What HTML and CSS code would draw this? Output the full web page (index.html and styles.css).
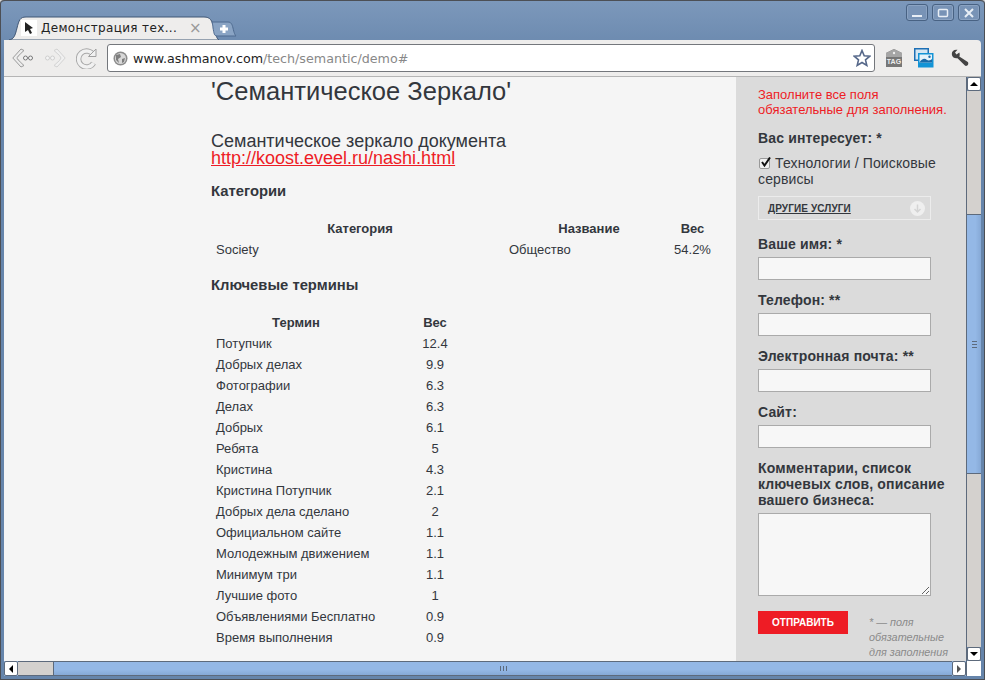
FILE: index.html
```html
<!DOCTYPE html>
<html lang="ru">
<head>
    <meta charset="UTF-8">
    <title>Демонстрация технологии</title>
    <link rel="stylesheet" href="styles.css">
</head>
<body>
<div class="window">
    <!-- верхняя полоса с вкладками -->
    <div class="tabstrip">
        <div class="tab">
            <svg class="tab-shape" width="210" height="24" viewBox="0 0 210 24">
                <path d="M0 24 C5 23 6 20 8 12 C10 4 11 1 17 1 L195 1 C201 1 203 4 205 12 C207 20 208 23 210 24 Z" fill="#eeedec" stroke="#3f5675" stroke-width="1"/>
            </svg>
            <span class="favicon">
                <svg width="10" height="12" viewBox="0 0 10 12"><path d="M1 0 L9 6 L6 7 L8 11 L6 12 L4 8 L1 10 Z" fill="#222"/></svg>
            </span>
            <span class="tab-title">Демонстрация тех...</span>
            <span class="tab-close">×</span>
        </div>
        <svg class="newtab" width="26" height="16" viewBox="0 0 26 16">
            <path d="M1 1 L17 1 C20 1 21 3 22 7 C23 12 24 14 25 15 L6 15 C3 15 3 12 2 7 C2 4 1 2 1 1 Z" fill="#8aa4c4" stroke="#4f6b90"/>
            <path d="M9 8 H17 M13 4 V12" stroke="#fff" stroke-width="3"/>
        </svg>
        <div class="winbtns">
            <div class="winbtn"><svg width="12" height="12" viewBox="0 0 12 12"><path d="M1 9 H11" stroke="#e8eef5" stroke-width="2"/></svg></div>
            <div class="winbtn"><svg width="12" height="12" viewBox="0 0 12 12"><rect x="1.5" y="2.5" width="9" height="7" rx="1" fill="none" stroke="#e8eef5" stroke-width="1.5"/></svg></div>
            <div class="winbtn"><svg width="12" height="12" viewBox="0 0 12 12"><path d="M2 2 L10 10 M10 2 L2 10" stroke="#e8eef5" stroke-width="2"/></svg></div>
        </div>
    </div>

    <!-- панель адреса -->
    <div class="toolbar">
        <svg class="nav-back" width="22" height="22" viewBox="0 0 22 22">
            <path d="M9 2 L0.8 11 L9 20 L12 18.5 L6.5 13.5 L5 11 L6.5 8.5 L12 3.5 Z" fill="#ececec" stroke="#9a9a9a"/>
            <path d="M9.5 5.5 L5 11 L9.5 16.5" fill="none" stroke="#bdbdbd"/>
            <circle cx="13.5" cy="11" r="2" fill="#f4f4f4" stroke="#777"/>
            <circle cx="18.5" cy="11" r="2" fill="#f4f4f4" stroke="#777"/>
        </svg>
        <svg class="nav-fwd" width="22" height="22" viewBox="0 0 22 22">
            <path d="M13 2 L21.2 11 L13 20 L10 18.5 L15.5 13.5 L17 11 L15.5 8.5 L10 3.5 Z" fill="#f0f0f0" stroke="#d2d2d2"/>
            <circle cx="3.5" cy="11" r="2" fill="#f4f4f4" stroke="#cfcfcf"/>
            <circle cx="8.5" cy="11" r="2" fill="#f4f4f4" stroke="#cfcfcf"/>
        </svg>
        <svg class="nav-reload" width="21" height="22" viewBox="0 0 21 22">
            <path d="M17.5 8 A8 8 0 1 0 17.5 16" fill="none" stroke="#a8a8a8" stroke-width="5.5"/>
            <path d="M17.5 8 A8 8 0 1 0 17.5 16" fill="none" stroke="#f1f1f1" stroke-width="3.5"/>
            <path d="M12.5 9.5 L20 9.5 L20 2 Z" fill="#f1f1f1" stroke="#a0a0a0"/>
        </svg>
        <div class="addressbar">
            <svg class="globe" width="15" height="15" viewBox="0 0 15 15">
                <circle cx="7.5" cy="7.5" r="7" fill="#8c8c8c"/>
                <circle cx="7.5" cy="7.5" r="5.5" fill="#d8d8d8"/>
                <path d="M3 4 L7 3 L8 6 L5 8 L6 12 L3 9 Z M9 8 L12 7 L11 11 L9 12 Z" fill="#7e7e7e"/>
            </svg>
            <span class="url">www.ashmanov.com<span class="url-path">/tech/semantic/demo#</span></span>
            <svg class="star" width="18" height="18" viewBox="0 0 18 18">
                <path d="M9 1.5 L11.2 6.7 L16.8 7.2 L12.5 10.9 L13.8 16.4 L9 13.5 L4.2 16.4 L5.5 10.9 L1.2 7.2 L6.8 6.7 Z" fill="#fff" stroke="#56688a" stroke-width="1.6"/>
            </svg>
        </div>
        <svg class="ext-tag" width="18" height="20" viewBox="0 0 18 20">
            <path d="M9 1 L17 5 V19 H1 V5 Z" fill="#777"/>
            <path d="M9 1 L17 5 V9 H1 V5 Z" fill="#a5a5a5"/>
            <circle cx="9" cy="5" r="1.2" fill="#eee"/>
            <text x="9" y="16" class="tag-text">TAG</text>
        </svg>
        <svg class="ext-pic" width="20" height="20" viewBox="0 0 20 20">
            <rect x="0" y="0" width="15" height="13" fill="#1c6fb5"/>
            <rect x="1.5" y="1.5" width="12" height="10" fill="#d5e6f2"/>
            <rect x="4" y="5" width="15.5" height="14.5" fill="#1394d6"/>
            <rect x="5.5" y="6.5" width="12.5" height="8" fill="#e4f2fa"/>
            <path d="M5.5 14.5 C8 10 11 10 13 12 C15 13 17 12 18 11 V14.5 Z" fill="#1a6aa8"/>
            <circle cx="15.5" cy="8.8" r="1.2" fill="#1a6aa8"/>
        </svg>
        <svg class="ext-wrench" width="18" height="18" viewBox="0 0 18 18">
            <path d="M0.8 5 C0.8 2 3 0.3 6.5 0.8 L4 3.5 L5.5 5.5 L8.3 3.5 C9 5.5 8.8 6.5 8.3 7.5 L16.8 13 C18 14.5 17 17.5 14.2 16.8 L6.5 9.2 C3.5 9.7 0.8 8 0.8 5 Z" fill="#444"/>
        </svg>
    </div>

    <div class="viewport">
        <div class="page-col">
            <div class="page">
                <main class="content">
                    <h1 class="title">'Семантическое Зеркало'</h1>
                    <div class="doc-head">
                        Семантическое зеркало документа<br>
                        <a href="#">http://koost.eveel.ru/nashi.html</a>
                    </div>

                    <h3 class="section">Категории</h3>
                    <table class="data cats">
                        <tr><th>Категория</th><th>Название</th><th>Вес</th></tr>
                        <tr><td>Society</td><td>Общество</td><td class="num">54.2%</td></tr>
                    </table>

                    <h3 class="section terms-head">Ключевые термины</h3>
                    <table class="data terms">
                        <tr><th>Термин</th><th>Вес</th></tr>
                        <tr><td>Потупчик</td><td class="num">12.4</td></tr>
                        <tr><td>Добрых делах</td><td class="num">9.9</td></tr>
                        <tr><td>Фотографии</td><td class="num">6.3</td></tr>
                        <tr><td>Делах</td><td class="num">6.3</td></tr>
                        <tr><td>Добрых</td><td class="num">6.1</td></tr>
                        <tr><td>Ребята</td><td class="num">5</td></tr>
                        <tr><td>Кристина</td><td class="num">4.3</td></tr>
                        <tr><td>Кристина Потупчик</td><td class="num">2.1</td></tr>
                        <tr><td>Добрых дела сделано</td><td class="num">2</td></tr>
                        <tr><td>Официальном сайте</td><td class="num">1.1</td></tr>
                        <tr><td>Молодежным движением</td><td class="num">1.1</td></tr>
                        <tr><td>Минимум три</td><td class="num">1.1</td></tr>
                        <tr><td>Лучшие фото</td><td class="num">1</td></tr>
                        <tr><td>Объявлениями Бесплатно</td><td class="num">0.9</td></tr>
                        <tr><td>Время выполнения</td><td class="num">0.9</td></tr>
                    </table>
                </main>

                <aside class="sidebar">
                    <p class="error">Заполните все поля обязательные для заполнения.</p>
                    <div class="label first">Вас интересует: *</div>
                    <div class="check-row">
                        <span class="checkbox">
                            <svg width="11" height="11" viewBox="0 0 11 11"><path d="M2 5 L4.5 8.5 L10 0.5" fill="none" stroke="#111" stroke-width="2"/></svg>
                        </span>
                        Технологии / Поисковые сервисы
                    </div>
                    <div class="more">
                        <a href="#">ДРУГИЕ УСЛУГИ</a>
                        <svg width="15" height="15" viewBox="0 0 15 15">
                            <circle cx="7.5" cy="7.5" r="7.5" fill="#efefef"/>
                            <path d="M7.5 3.5 V11 M4.5 8 L7.5 11 L10.5 8" fill="none" stroke="#d4d4d4" stroke-width="1.5"/>
                        </svg>
                    </div>
                    <div class="label">Ваше имя: *</div>
                    <input class="field" type="text">
                    <div class="label">Телефон: **</div>
                    <input class="field" type="text">
                    <div class="label">Электронная почта: **</div>
                    <input class="field" type="text">
                    <div class="label">Сайт:</div>
                    <input class="field" type="text">
                    <div class="label">Комментарии, список ключевых слов, описание вашего бизнеса:</div>
                    <textarea class="field area"></textarea>
                    <div class="form-bottom">
                        <button class="send" type="button">ОТПРАВИТЬ</button>
                        <div class="note">* — поля обязательные для заполнения</div>
                    </div>
                </aside>
            </div>

            <div class="hbar">
                <div class="sb-btn"><i class="arrow-left"></i></div>
                <div class="htrack"></div>
                <div class="hthumb"><span class="grip-h"></span></div>
                <div class="sb-btn"><i class="arrow-right"></i></div>
            </div>
        </div>

        <div class="vbar">
            <div class="sb-btn"><i class="arrow-up"></i></div>
            <div class="vtrack-top"></div>
            <div class="vthumb"><span class="grip-v"></span></div>
            <div class="vtrack-bottom"></div>
            <div class="sb-btn"><i class="arrow-down"></i></div>
            <div class="corner"></div>
        </div>
    </div>
</div>
</body>
</html>
```

FILE: styles.css
```css
html, body {
    margin: 0;
    height: 100%;
    overflow: hidden;
    background: #d8d8d8;
}

.window {
    box-sizing: border-box;
    width: 985px;
    height: 680px;
    display: flex;
    flex-direction: column;
    padding: 0 4px 4px 4px;
    border: 1px solid #4c4f55;
    border-width: 1px 0 0 0;
    border-radius: 4px 4px 0 0;
    background: linear-gradient(#7c98bb, #6685ab 60px);
    font-family: "Liberation Sans", Arial, sans-serif;
    color: #33373d;
    box-shadow: inset 1px 0 0 #4c4f55, inset -1px 0 0 #4c4f55, inset 0 -1px 0 #4c4f55;
}

/* вкладки */
.tabstrip {
    height: 39px;
    flex: none;
    display: flex;
    align-items: flex-end;
    position: relative;
}

.tab {
    width: 210px;
    height: 24px;
    margin-left: 5px;
    position: relative;
    display: flex;
    align-items: center;
    font-family: "DejaVu Sans", sans-serif;
    font-size: 12px;
    color: #222;
}

.tab-shape {
    position: absolute;
    left: 0;
    top: 0;
}

.favicon {
    position: relative;
    width: 16px;
    height: 16px;
    margin-left: 12px;
    background: #fff;
    display: flex;
    align-items: center;
    justify-content: center;
}

.tab-title {
    position: relative;
    margin-left: 4px;
    width: 148px;
    white-space: nowrap;
    letter-spacing: 0.35px;
}

.tab-close {
    position: relative;
    color: #999;
    font-size: 15px;
}

.newtab {
    margin: 0 0 3px -8px;
    position: relative;
}

.winbtns {
    margin-left: auto;
    align-self: flex-start;
    display: flex;
    gap: 4px;
    margin-top: 3px;
    padding-right: 1px;
}

.winbtn {
    box-sizing: border-box;
    width: 22px;
    height: 17px;
    border: 1px solid #486283;
    border-radius: 3px;
    background: #7893b6;
    box-shadow: inset 0 0 0 1px #8ba3c2;
    display: flex;
    align-items: center;
    justify-content: center;
}

/* панель адреса */
.toolbar {
    height: 36px;
    flex: none;
    display: flex;
    align-items: center;
    background: #eeedec;
    border-bottom: 1px solid #b5b5b5;
    border-radius: 0 4px 0 0;
}

.nav-back { margin-left: 8px; }
.nav-fwd { margin-left: 10px; }
.nav-reload { margin-left: 10px; }

.addressbar {
    box-sizing: border-box;
    width: 768px;
    height: 28px;
    margin-left: 10px;
    display: flex;
    align-items: center;
    background: #fff;
    border: 1px solid #74777c;
    border-radius: 3px;
    padding: 0 3px 0 5px;
}

.url {
    margin-left: 5px;
    font-family: "DejaVu Sans", sans-serif;
    font-size: 12.7px;
    color: #222;
    flex: 1;
}

.url-path { color: #888; }

.ext-tag { margin-left: 10px; }
.ext-pic { margin-left: 11px; }
.ext-wrench { margin-left: 17px; }

.tag-text {
    font-family: "Liberation Sans", sans-serif;
    font-size: 7px;
    font-weight: bold;
    fill: #eee;
    text-anchor: middle;
}

/* область страницы */
.viewport {
    flex: 1;
    min-height: 0;
    display: flex;
}

.page-col {
    flex: 1;
    min-width: 0;
    display: flex;
    flex-direction: column;
}

.page {
    flex: 1;
    min-height: 0;
    display: flex;
    overflow: hidden;
    background: #f5f5f5;
}

.content {
    flex: none;
    width: 525px;
    margin-left: 207px;
}

.title {
    margin: 0;
    font-size: 25.5px;
    font-weight: normal;
    line-height: 28px;
}

.doc-head {
    margin-top: 28px;
    font-size: 18px;
    line-height: 17px;
}

.doc-head a {
    color: #ee1c25;
}

.section {
    margin: 14px 0 0;
    font-size: 14.8px;
    line-height: 20px;
}

.terms-head {
    margin-top: 15px;
}

.data {
    border-collapse: collapse;
    table-layout: fixed;
    margin-top: 17px;
    font-size: 13px;
}

.data th, .data td {
    padding: 0 5px;
    height: 21px;
    line-height: 15px;
}

.data td { color: #33373d; }
.num { text-align: center; }

.cats { width: 500px; }
.cats th:nth-child(1) { padding-left: 10px; width: 278px; }
.cats th:nth-child(2) { width: 160px; }
.cats th:nth-child(3), .cats .num { padding: 0; }

.terms { width: 278px; }
.terms th:nth-child(1) { width: 160px; }

/* форма справа */
.sidebar {
    flex: none;
    box-sizing: border-box;
    width: 230px;
    padding: 10px 0 0 22px;
    background: #dbdbdb;
}

.error {
    margin: 0;
    width: 195px;
    color: #ee1c25;
    font-size: 13px;
    line-height: 15px;
}

.label {
    margin-top: 12px;
    font-size: 14px;
    font-weight: bold;
    line-height: 16px;
    width: 195px;
    letter-spacing: 0.15px;
}

.label.first {
    margin-top: 13px;
}

.check-row {
    margin-top: 9px;
    font-size: 14px;
    line-height: 16px;
    width: 190px;
    letter-spacing: 0.13px;
}

.checkbox {
    display: inline-block;
    box-sizing: border-box;
    width: 11px;
    height: 11px;
    margin: 0 1px 1px 1px;
    border: 1px solid #999;
    border-radius: 2px;
    background: #f0f0f0;
    line-height: 0;
}

.checkbox svg {
    margin: -2px 0 0 0;
}

.more {
    box-sizing: border-box;
    width: 173px;
    height: 24px;
    margin-top: 9px;
    padding: 0 5px 0 9px;
    display: flex;
    align-items: center;
    justify-content: space-between;
    border: 1px solid #ececec;
}

.more a {
    color: #33373d;
    font-size: 10px;
    font-weight: bold;
    letter-spacing: 0.1px;
}

.more + .label {
    margin-top: 16px;
}

.field {
    display: block;
    box-sizing: border-box;
    width: 173px;
    height: 23px;
    margin: 5px 0 0;
    border: 1px solid #aaa;
    background: #f7f7f7;
    padding: 0;
    border-radius: 0;
}

.field + .label {
    margin-top: 12px;
}

.area {
    height: 83px;
    resize: both;
}

.form-bottom {
    display: flex;
    margin-top: 15px;
}

.send {
    width: 90px;
    height: 23px;
    border: none;
    padding: 0;
    background: #ee1c25;
    color: #fff;
    font-family: "Liberation Sans", sans-serif;
    font-size: 10px;
    font-weight: bold;
}

.note {
    margin: 4px 0 0 21px;
    width: 85px;
    color: #8a8a8a;
    font-size: 10.8px;
    font-style: italic;
    line-height: 15px;
}

/* полосы прокрутки */
.hbar {
    flex: none;
    height: 15px;
    display: flex;
    background: #8fb4e0;
}

.vbar {
    flex: none;
    width: 14px;
    display: flex;
    flex-direction: column;
    border-left: 1px solid #5d6a7c;
}

.sb-btn {
    flex: none;
    box-sizing: border-box;
    width: 14px;
    height: 14px;
    background: #fff;
    border: 1px solid #5d6a7c;
    border-radius: 2px;
    display: flex;
    align-items: center;
    justify-content: center;
}

.hbar .sb-btn {
    height: 15px;
}

.vtrack-top, .vtrack-bottom, .htrack {
    background: #d4d1ce;
}

.vtrack-top { height: 123px; flex: none; }
.vtrack-bottom { flex: 1; }
.htrack { width: 36px; flex: none; border: solid #5d6a7c; border-width: 1px 1px 1px 0; box-sizing: border-box; }

.vthumb {
    flex: none;
    height: 258px;
    background: linear-gradient(90deg, #94b8e6 60%, #86a9d6);
    border-top: 1px solid #5d6a7c;
    border-bottom: 1px solid #5d6a7c;
    display: flex;
    align-items: center;
    justify-content: center;
}

.hthumb {
    flex: 1;
    background: linear-gradient(#94b8e6 60%, #86a9d6);
    border-top: 1px solid #5d6a7c;
    border-bottom: 1px solid #5d6a7c;
    display: flex;
    align-items: center;
    justify-content: center;
}

.grip-v {
    width: 5px;
    height: 7px;
    background: repeating-linear-gradient(#5d6a7c 0 1px, transparent 1px 3px);
}

.grip-h {
    width: 7px;
    height: 5px;
    background: repeating-linear-gradient(90deg, #5d6a7c 0 1px, transparent 1px 3px);
}

.corner {
    flex: none;
    height: 15px;
    background: #fff;
}

.arrow-up, .arrow-down, .arrow-left, .arrow-right {
    width: 0;
    height: 0;
    border: 4px solid transparent;
}

.arrow-up { border-bottom-color: #000; border-top-width: 0; }
.arrow-down { border-top-color: #000; border-bottom-width: 0; }
.arrow-left { border-right-color: #000; border-left-width: 0; }
.arrow-right { border-left-color: #555; border-right-width: 0; }
```
